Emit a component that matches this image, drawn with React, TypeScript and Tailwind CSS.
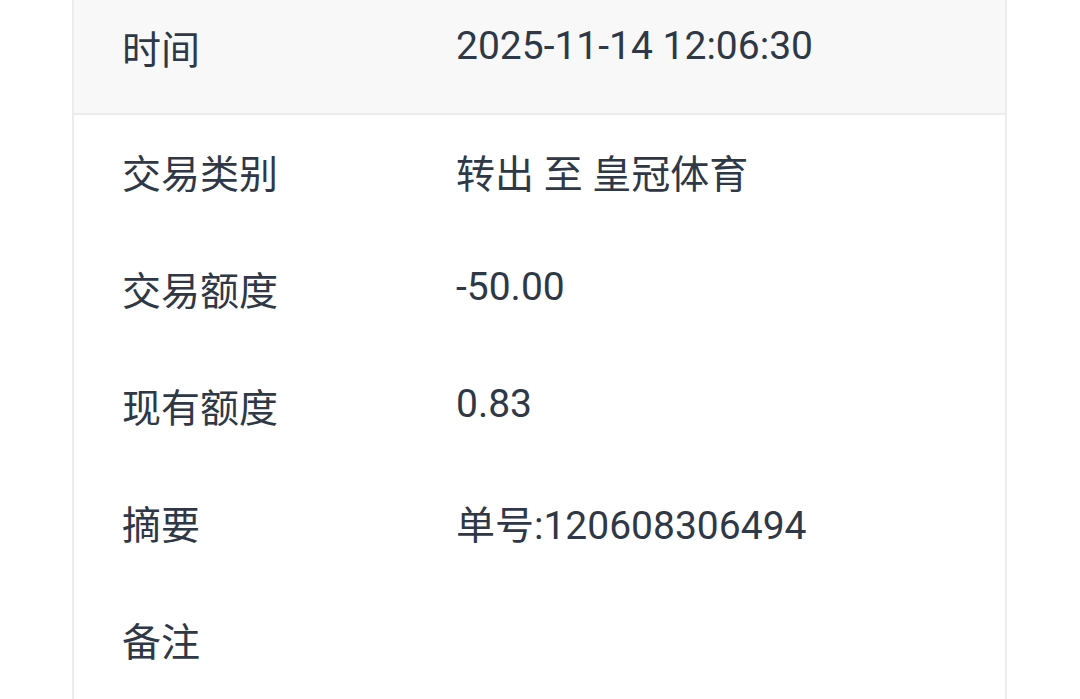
const rows = [
  { label: '交易类别', value: '转出 至 皇冠体育', num: false },
  { label: '交易额度', value: '-50.00', num: true },
  { label: '现有额度', value: '0.83', num: true },
  { label: '摘要', value: '单号:120608306494', num: false },
  { label: '备注', value: '', num: false },
]

export default function App() {
  return (
    <div
      className="w-[1080px] h-[699px] overflow-hidden bg-white text-[39px] text-[#2f3846]"
      style={{ fontFamily: 'Roboto, "Noto Sans CJK SC", sans-serif' }}
    >
      <div className="mx-[72px] w-[935px] h-full border-x-[2px] border-[#ececec]">
        {/* header row */}
        <div className="flex h-[115px] bg-[#f8f8f8] border-b-[2px] border-[#ececec]">
          <div className="w-[382px] shrink-0 pl-[48px] pt-[25px] leading-[52px]">时间</div>
          <div className="pt-[20px] leading-[52px]">2025-11-14 12:06:30</div>
        </div>
        {rows.map((r) => (
          <div key={r.label} className="flex h-[117px]">
            <div className="w-[382px] shrink-0 pl-[48px] pt-[34px] leading-[52px]">{r.label}</div>
            <div className={r.num ? 'pt-[29px] leading-[52px]' : 'pt-[34px] leading-[52px]'}>{r.value}</div>
          </div>
        ))}
      </div>
    </div>
  )
}
